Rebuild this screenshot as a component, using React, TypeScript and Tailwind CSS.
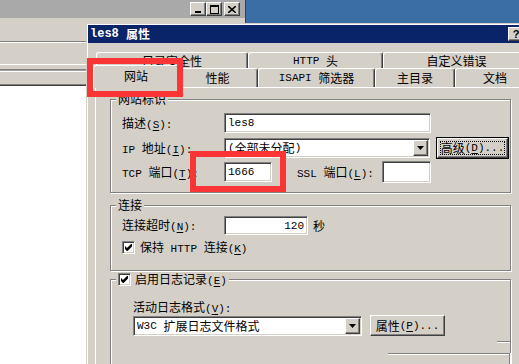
import React from 'react';

const TOKEN = /&.|[\u3000-\u9fff\uff00-\uffef]+|[^&\u3000-\u9fff\uff00-\uffef]+/g;
const CJK = /^[\u3000-\u9fff\uff00-\uffef]/;

// mixed text: CJK runs in Noto, latin runs in a narrow mono; "&X" = underlined access key
function Txt({ s }: { s: string }) {
  const parts = s.match(TOKEN) || [];
  return (
    <>
      {parts.map((p, i) => {
        if (p[0] === '&')
          return (
            <span key={i} className="font-['Liberation_Mono',monospace] text-[11px] underline underline-offset-2">
              {p.slice(1)}
            </span>
          );
        if (CJK.test(p))
          return (
            <span key={i} className="font-['Noto_Sans_CJK_SC',sans-serif] text-[12px]">
              {p}
            </span>
          );
        return (
          <span key={i} className="font-['Liberation_Mono',monospace] text-[11px] whitespace-pre">
            {p}
          </span>
        );
      })}
    </>
  );
}

const raised =
  'border border-t-white border-l-white border-r-[#404040] border-b-[#404040] shadow-[inset_-1px_-1px_0_#808080] bg-[#d4d0c8]';
const sunken =
  'border border-t-[#808080] border-l-[#808080] border-r-white border-b-white shadow-[inset_1px_1px_0_#404040,inset_-1px_-1px_0_#d4d0c8] bg-white';

const Arrow = () => (
  <svg width="7" height="4" viewBox="0 0 7 4">
    <polygon points="0,0 7,0 3.5,4" fill="#000" />
  </svg>
);

const CheckBox = () => (
  <span className={`${sunken} w-[13px] h-[13px] shrink-0 flex items-center justify-center`}>
    <svg width="7" height="7" viewBox="0 0 7 7">
      <path d="M0 2 L2 4 L6 0 L7 0 L7 2.5 L2.5 7 L1.8 7 L0 5 Z" fill="#000" />
    </svg>
  </span>
);

const Combo = ({ text, w, h }: { text: string; w: string; h: string }) => (
  <div className={`${sunken} ${w} ${h} flex items-stretch p-[1px]`}>
    <div className="flex-1 flex items-center pl-[2px] leading-[14px] overflow-hidden whitespace-nowrap">
      <Txt s={text} />
    </div>
    <div className={`${raised} w-[15px] flex items-center justify-center`}>
      <Arrow />
    </div>
  </div>
);

const Group = ({ label, children, className }: { label: React.ReactNode; children: React.ReactNode; className?: string }) => (
  <div className={`border border-[#808080] shadow-[inset_1px_1px_0_#fff,1px_1px_0_#fff] w-[401px] ${className ?? ''}`}>
    <div className="-mt-[8px] w-fit px-[2px] bg-[#d4d0c8] h-[14px] leading-[14px] flex items-center gap-[4px] ml-[5px]">
      {label}
    </div>
    {children}
  </div>
);

const Tab = ({ label, w, sel }: { label: string; w: string; sel?: boolean }) => (
  <div
    className={`${w} ${
      sel ? 'h-[23px] -mb-[1px] -mx-[2px] relative z-10 pb-[3px]' : 'h-full'
    } bg-[#d4d0c8] border-t border-l border-white border-r border-r-[#404040] rounded-t-[3px] shadow-[inset_-1px_0_0_#808080] flex items-center justify-center leading-[14px] shrink-0`}
  >
    <Txt s={label} />
  </div>
);

const CapBtn = ({ children }: { children: React.ReactNode }) => (
  <div className={`${raised} w-[16px] h-[14px] flex items-center justify-center`}>{children}</div>
);

function BackWindow() {
  return (
    <div className="absolute left-0 top-0 w-[246px] h-[364px] bg-[#d4d0c8] border-r border-r-[#404040] flex flex-col">
      <div className="h-[18px] bg-[#a9a9a9] flex items-center justify-end pr-[5px]">
        <CapBtn>
          <svg width="8" height="8" viewBox="0 0 8 8">
            <rect x="1" y="6" width="6" height="2" fill="#000" />
          </svg>
        </CapBtn>
        <CapBtn>
          <svg width="9" height="9" viewBox="0 0 9 9">
            <rect x="0.5" y="0.5" width="8" height="8" fill="none" stroke="#000" />
            <rect x="0" y="0" width="9" height="2" fill="#000" />
          </svg>
        </CapBtn>
        <div className="w-[2px]" />
        <CapBtn>
          <svg width="8" height="7" viewBox="0 0 8 7">
            <path d="M0 0 L8 7 M8 0 L0 7" stroke="#000" strokeWidth="1.6" />
          </svg>
        </CapBtn>
      </div>
      <div className="h-[23px]" />
      <div className="h-[1px] bg-[#808080]" />
      <div className="h-[1px] bg-white" />
      <div className="h-[21px]" />
      <div className="h-[1px] bg-white" />
      <div className="h-[4px]" />
      <div className="h-[1px] bg-[#808080]" />
      <div className="h-[1px] bg-[#a0a0a0]" />
      <div className="h-[1px] bg-white" />
      <div className="h-[12px]" />
      <div className="h-[1px] bg-[#808080]" />
      <div className="h-[1px] bg-[#404040]" />
      <div className="flex-1 bg-white" />
    </div>
  );
}

function Dialog() {
  return (
    <div className="absolute left-[86px] top-[23px] w-[440px] h-[370px] bg-[#d4d0c8] pt-[2px] pl-[2px] shadow-[inset_1px_1px_0_#d4d0c8,inset_2px_2px_0_#fff] flex flex-col">
      {/* title bar */}
      <div className="h-[18px] bg-[#0a246a] flex items-center pl-[2px] pr-[2px] text-white font-bold leading-[14px]">
        <span className="font-['Liberation_Mono',monospace] text-[12px] whitespace-pre">les8 </span>
        <span className="font-['Noto_Sans_CJK_SC',sans-serif] text-[12px]">属性</span>
        <div className={`${raised} ml-auto w-[16px] h-[14px] flex items-center justify-center text-black text-[11px] font-['Liberation_Sans',sans-serif] font-bold`}>
          ?
        </div>
      </div>

      <div className="pl-[7px] mt-[9px] flex flex-col">
        {/* tabs, back row */}
        <div className="flex h-[16px] pl-[1px]">
          <Tab label="目录安全性" w="w-[152px]" />
          <Tab label="HTTP 头" w="w-[135px]" />
          <Tab label="自定义错误" w="w-[147px]" />
        </div>
        {/* tabs, front row */}
        <div className="flex h-[19px] items-end">
          <Tab label="网站" w="w-[86px]" sel />
          <Tab label="性能" w="w-[81px]" />
          <Tab label="ISAPI 筛选器" w="w-[117px]" />
          <Tab label="主目录" w="w-[80px]" />
          <Tab label="文档" w="w-[80px]" />
        </div>

        {/* tab page (runs past the bottom of the shot) */}
        <div className="h-[300px] border-t border-l border-white pl-[14px] pt-[11px] flex flex-col">
          <Group label={<Txt s="网站标识" />}>
            <div className="mt-[7px] pl-[11px] pb-[9px] flex flex-col">
              <div className="h-[20px] flex items-center">
                <div className="w-[102px] leading-[14px]">
                  <Txt s="描述(&S):" />
                </div>
                <div className={`${sunken} w-[207px] h-[20px] flex items-center pl-[3px] leading-[14px]`}>
                  <Txt s="les8" />
                </div>
              </div>
              <div className="h-[22px] mt-[4px] flex items-center">
                <div className="w-[102px] leading-[14px]">
                  <Txt s="IP 地址(&I):" />
                </div>
                <Combo text="(全部未分配)" w="w-[206px]" h="h-[20px]" />
                <div className="ml-[6px] w-[73px] h-[22px] border border-black">
                  <div className={`${raised} w-full h-full flex items-center justify-center p-[2px]`}>
                    <div className="w-full h-full border border-dotted border-black flex items-center justify-center leading-[14px] whitespace-nowrap">
                      <Txt s="高级(&D)..." />
                    </div>
                  </div>
                </div>
              </div>
              <div className="h-[22px] mt-[2px] flex items-center">
                <div className="w-[102px] leading-[14px]">
                  <Txt s="TCP 端口(&T):" />
                </div>
                <div className={`${sunken} w-[48px] h-[20px] flex items-center pl-[3px] leading-[14px]`}>
                  <Txt s="1666" />
                </div>
                <div className="ml-[25px] w-[85px] leading-[14px]">
                  <Txt s="SSL 端口(&L):" />
                </div>
                <div className={`${sunken} w-[49px] h-[22px]`} />
              </div>
            </div>
          </Group>

          <Group label={<Txt s="连接" />} className="mt-[12px]">
            <div className="mt-[4px] pl-[11px] pb-[16px] flex flex-col">
              <div className="h-[19px] flex items-center">
                <div className="w-[102px] leading-[14px]">
                  <Txt s="连接超时(&N):" />
                </div>
                <div className={`${sunken} w-[84px] h-[19px] flex items-center justify-end pr-[3px] leading-[14px]`}>
                  <Txt s="120" />
                </div>
                <div className="ml-[5px] leading-[14px]">
                  <Txt s="秒" />
                </div>
              </div>
              <div className="mt-[6px] h-[13px] flex items-center gap-[5px] leading-[14px]">
                <CheckBox />
                <span>
                  <Txt s="保持 HTTP 连接(&K)" />
                </span>
              </div>
            </div>
          </Group>

          <Group
            className="mt-[8px] h-[120px]"
            label={
              <>
                <CheckBox />
                <span>
                  <Txt s="启用日志记录(&E)" />
                </span>
              </>
            }
          >
            <div className="pl-[22px] flex flex-col">
              <div className="mt-[13px] h-[14px] leading-[14px]">
                <Txt s="活动日志格式(&V):" />
              </div>
              <div className="mt-[2px] h-[21px] flex items-center">
                <Combo text="W3C 扩展日志文件格式" w="w-[229px]" h="h-[20px]" />
                <div className={`${raised} ml-[8px] w-[75px] h-[21px] flex items-center justify-center leading-[14px]`}>
                  <Txt s="属性(&P)..." />
                </div>
              </div>
              {/* short etched edge near the right, then a second box whose top shows */}
              <div className="mt-[5px] flex justify-end">
                <div className="w-[13px] h-[1px] bg-[#808080] shadow-[0_1px_0_#fff]" />
              </div>
              <div className="mt-[11px] flex justify-end">
                <div className="w-[122px] h-[20px] border-t border-r border-[#808080] shadow-[inset_0_1px_0_#fff,1px_0_0_#fff]" />
              </div>
            </div>
          </Group>
        </div>
      </div>
    </div>
  );
}

export default function App() {
  return (
    <div className="relative w-[519px] h-[364px] overflow-hidden bg-[#3a6ea5] text-black">
      <BackWindow />
      <Dialog />
      {/* red annotation boxes */}
      <div className="absolute left-[87px] top-[58px] w-[96px] h-[39px] border-[6px] border-[#fb3535] z-20" />
      <div className="absolute left-[190px] top-[151px] w-[96px] h-[41px] border-[6px] border-[#fb3535] z-20" />
    </div>
  );
}
